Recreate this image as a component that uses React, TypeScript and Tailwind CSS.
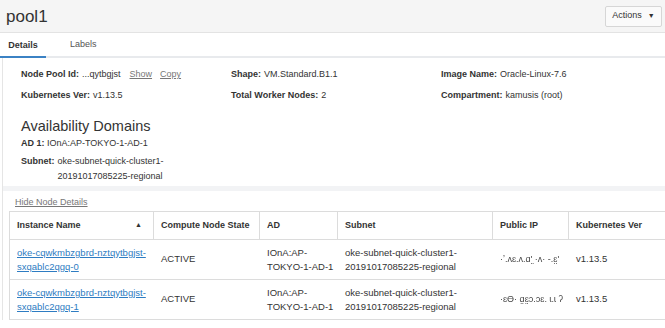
import { Fragment } from "react";

const font = { fontFamily: '"Liberation Sans", Arial, sans-serif' };

function Field({ label, value, extra }: { label: string; value: string; extra?: boolean }) {
  return (
    <div className="flex items-center text-[9px] leading-[12px] text-[#333]">
      <span className="font-bold">{label}</span>
      <span className="ml-[3px]">{value}</span>
      {extra && (
        <>
          <span className="ml-[9px] underline text-[#777]">Show</span>
          <span className="ml-[8px] underline text-[#777]">Copy</span>
        </>
      )}
    </div>
  );
}

const rows = [
  { name: ["oke-cqwkmbzgbrd-nztqytbgjst-", "sxqablc2qgq-0"], ip: "·ʼ.ʌɛ.ʌ.ɑʹ̤ ·ʌ· -.ɛ̤ʹ" },
  { name: ["oke-cqwkmbzgbrd-nztqytbgjst-", "sxqablc2qgq-1"], ip: "·ɛϴ· ɑ̤ɛ̤ɔ.ɔɛ. ɩ.ɩ ʔ" },
];

export default function App() {
  return (
    <div style={font} className="w-[665px] h-[328px] overflow-hidden bg-white text-[#333]">
      <div className="h-[33px] bg-[#f5f5f5] border-b border-[#e3e3e3] flex items-center justify-between pl-[6px] pr-[3px]">
        <span className="text-[17px] text-[#333] leading-none">pool1</span>
        <button className="h-[21px] w-[57px] border border-[#d6d6d6] rounded-[2px] bg-[#fafafa] text-[9px] text-[#333] flex items-center justify-center gap-[6px]">
          Actions
          <span className="text-[7px]">▼</span>
        </button>
      </div>
      <div className="h-[25px] flex items-end border-b-[2px] border-[#e8eaed]">
        <div className="w-[46px] h-full flex items-center justify-center font-bold text-[9px] border-b-[2px] border-[#3b82c4] -mb-[2px]">
          Details
        </div>
        <div className="ml-[24px] h-full flex items-center text-[9px] text-[#555]">Labels</div>
      </div>
      <div className="border-l border-[#e5e5e5] ml-[2px]">
        <div className="pl-[18px] pt-[10px] pb-[2px] border-b-[5px] border-[#f2f3f5]">
          <div className="grid grid-cols-[210px_210px_1fr] gap-y-[9px]">
            <Field label="Node Pool Id:" value="...qytbgjst" extra />
            <Field label="Shape:" value="VM.Standard.B1.1" />
            <Field label="Image Name:" value="Oracle-Linux-7.6" />
            <Field label="Kubernetes Ver:" value="v1.13.5" />
            <Field label="Total Worker Nodes:" value="2" />
            <Field label="Compartment:" value="kamusis (root)" />
          </div>
          <div className="mt-[18px] text-[14.5px] leading-[14px] text-[#333]">Availability Domains</div>
          <div className="mt-[4px] text-[9px] leading-[12px]">
            <span className="font-bold">AD 1:</span> IOnA:AP-TOKYO-1-AD-1
          </div>
          <div className="mt-[5px] text-[9px] flex leading-[15px]">
            <span className="font-bold mr-[3px]">Subnet:</span>
            <span>
              oke-subnet-quick-cluster1-
              <br />
              20191017085225-regional
            </span>
          </div>
        </div>
        <div className="pl-[12px] pt-[5px] pb-[3px] text-[9px] leading-[12px] text-[#777] underline">Hide Node Details</div>
        <div className="ml-[6px]">
          <div className="grid grid-cols-[145px_106px_78px_155px_76px_110px] text-[9.5px] text-[#333] border-t border-[#dcdcdc]">
            {["Instance Name", "Compute Node State", "AD", "Subnet", "Public IP", "Kubernetes Ver"].map((h, i) => (
              <div
                key={h}
                className="h-[28px] flex items-center justify-between px-[7px] text-[9px] font-bold whitespace-nowrap border-b border-[#dcdcdc] border-r first:border-l"
              >
                <span>{h}</span>
                {i === 0 && <span className="text-[7px] mr-[4px]">▲</span>}
              </div>
            ))}
            {rows.map((r) => (
              <Fragment key={r.name[1]}>
                <div className="h-[40px] flex items-center px-[7px] border-b border-[#dcdcdc] border-l leading-[14px] text-[#2e7cc2] underline whitespace-nowrap">
                  <span>
                    {r.name[0]}
                    <br />
                    {r.name[1]}
                  </span>
                </div>
                <div className="h-[40px] flex items-center px-[7px] border-b border-[#dcdcdc]">ACTIVE</div>
                <div className="h-[40px] flex items-center px-[7px] border-b border-[#dcdcdc] leading-[14px] whitespace-nowrap">
                  <span>
                    IOnA:AP-
                    <br />
                    TOKYO-1-AD-1
                  </span>
                </div>
                <div className="h-[40px] flex items-center px-[7px] border-b border-[#dcdcdc] leading-[14px] whitespace-nowrap">
                  <span>
                    oke-subnet-quick-cluster1-
                    <br />
                    20191017085225-regional
                  </span>
                </div>
                <div className="h-[40px] flex items-center px-[7px] border-b border-[#dcdcdc] text-[9px] text-[#444] blur-[0.4px] whitespace-nowrap overflow-hidden">
                  {r.ip}
                </div>
                <div className="h-[40px] flex items-center px-[7px] border-b border-[#dcdcdc]">v1.13.5</div>
              </Fragment>
            ))}
          </div>
        </div>
      </div>
    </div>
  );
}
